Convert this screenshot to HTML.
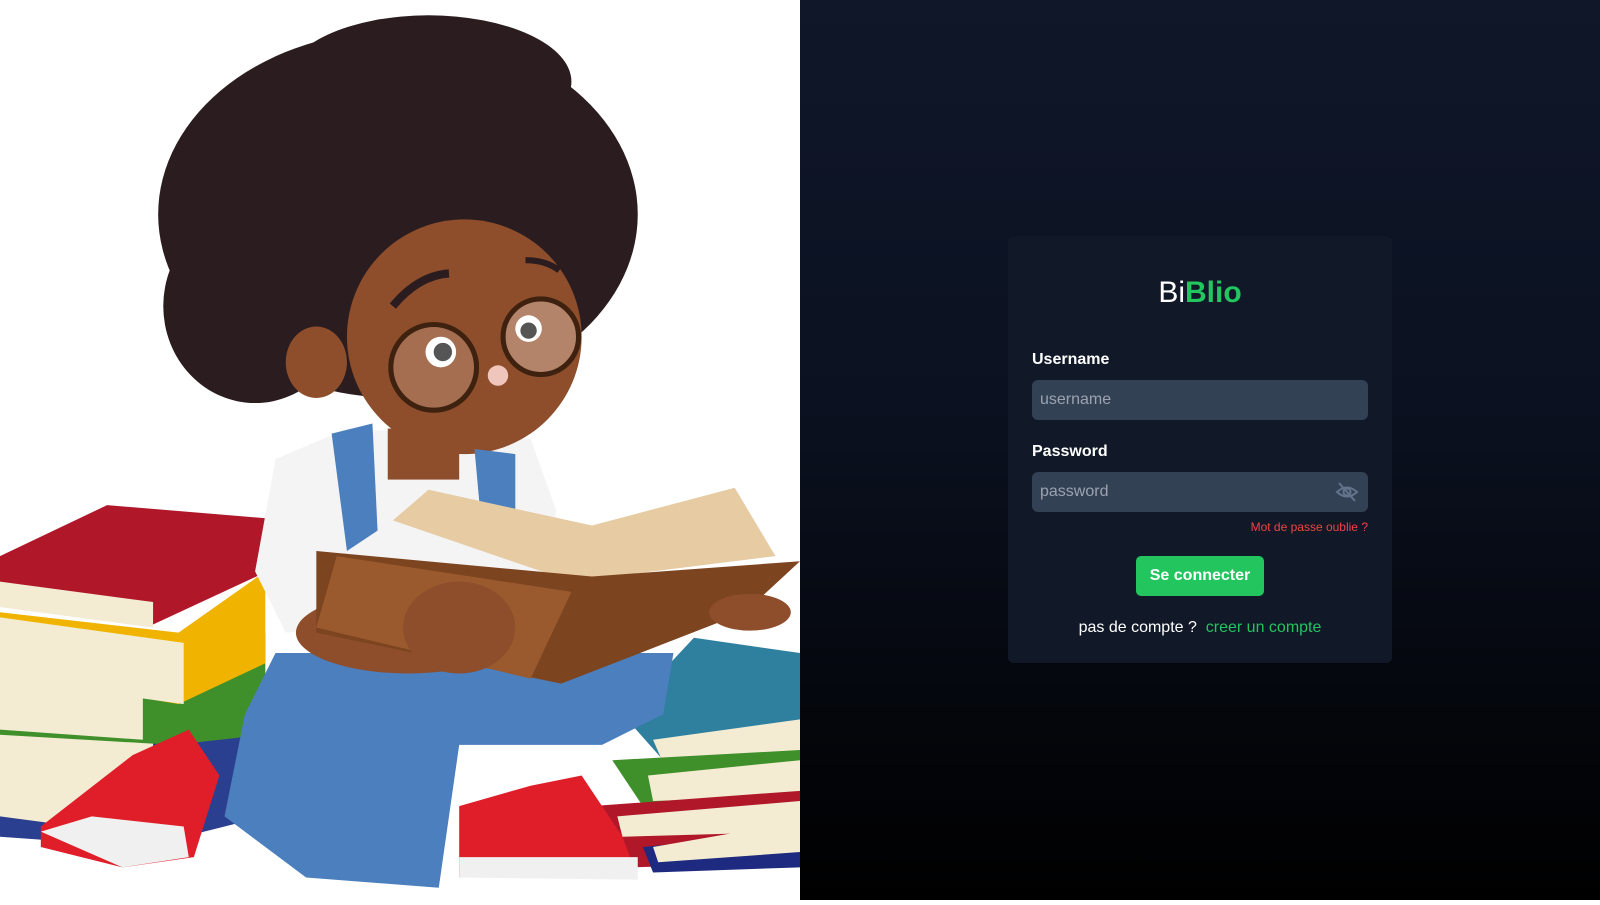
<!DOCTYPE html>
<html><head><meta charset="utf-8"><style>
*{margin:0;padding:0;box-sizing:border-box}
body{width:1600px;height:900px;overflow:hidden;font-family:"Liberation Sans",sans-serif;position:relative;background:#fff}
.left{position:absolute;left:0;top:0;width:800px;height:900px;background:#fff}
.right{position:absolute;left:800px;top:0;width:800px;height:900px;background:linear-gradient(#0f1729 0%,#0b1120 45%,#000 100%)}
.card{position:absolute;left:208px;top:236px;width:384px;height:427px;background:#111827;border-radius:6px}
h1{position:absolute;left:0;right:0;top:276px;text-align:center;font-size:30px;font-weight:normal;color:#fff}
h1 b{color:#22c55e;font-weight:bold}
.lbl{position:absolute;left:1032px;color:#fff;font-weight:bold;font-size:16px}
.inp{position:absolute;left:1032px;width:336px;height:40px;background:#334155;border-radius:6px;color:#9ca3af;font-size:16px;padding-left:8px;line-height:40px}
.abs{position:absolute}
</style></head><body>
<div class="left">
<svg width="800" height="900" viewBox="0 0 784 882">
<!-- left books -->
<polygon points="0,720 140,705 260,690 260,800 140,830 0,820" fill="#2a3f8f"/>
<polygon points="0,690 150,700 150,820 0,800" fill="#f3ecd2"/>
<polygon points="0,650 170,660 260,620 260,720 170,730 0,720" fill="#3f8f2a"/>
<polygon points="0,660 140,665 140,725 0,715" fill="#f3ecd2"/>
<polygon points="0,600 175,620 260,560 260,650 175,690 0,660" fill="#f0b400"/>
<polygon points="0,605 180,630 180,690 0,665" fill="#f3ecd2"/>
<polygon points="0,545 105,495 262,508 262,560 150,612 0,585" fill="#b0182a"/>
<polygon points="0,570 150,590 150,615 0,595" fill="#f3ecd2"/>
<!-- right books -->
<polygon points="610,700 680,625 784,640 784,720 650,745" fill="#2f7f9f"/>
<polygon points="640,725 784,705 784,740 650,748" fill="#f3ecd2"/>
<polygon points="600,745 784,735 784,790 630,790" fill="#3f8f2a"/>
<polygon points="635,760 784,745 784,780 640,785" fill="#f3ecd2"/>
<polygon points="580,790 784,775 784,845 620,850" fill="#b0182a"/>
<polygon points="605,800 784,785 784,815 610,820" fill="#f3ecd2"/>
<polygon points="630,830 784,815 784,850 640,855" fill="#1e2a7f"/>
<polygon points="640,830 784,805 784,835 645,845" fill="#f3ecd2"/>
<!-- hair -->
<ellipse cx="390" cy="210" rx="235" ry="180" fill="#2b1d1f"/>
<ellipse cx="420" cy="80" rx="140" ry="65" fill="#2b1d1f"/>
<ellipse cx="250" cy="300" rx="90" ry="95" fill="#2b1d1f"/>
<!-- shirt -->
<polygon points="270,450 340,420 520,430 545,500 540,600 280,620 250,560" fill="#f4f4f4"/>
<!-- face -->
<ellipse cx="455" cy="330" rx="115" ry="115" fill="#8e4e2c"/>
<ellipse cx="310" cy="355" rx="30" ry="35" fill="#8e4e2c"/>
<rect x="380" y="420" width="70" height="50" fill="#8e4e2c"/>
<circle cx="425" cy="360" r="42" fill="#c9a08a" fill-opacity=".4" stroke="#3e220f" stroke-width="5"/>
<circle cx="530" cy="330" r="37" fill="#d8b8a8" fill-opacity=".5" stroke="#3e220f" stroke-width="5"/>
<circle cx="432" cy="345" r="15" fill="#fff"/><circle cx="434" cy="345" r="9" fill="#555"/>
<circle cx="518" cy="322" r="13" fill="#fff"/><circle cx="518" cy="324" r="8" fill="#555"/>
<path d="M385 300 Q410 270 440 268" stroke="#2b1d1f" stroke-width="8" fill="none"/>
<path d="M515 255 Q535 255 548 265" stroke="#2b1d1f" stroke-width="6" fill="none"/>
<circle cx="488" cy="368" r="10" fill="#f0c6bc"/>
<!-- straps -->
<polygon points="325,425 365,415 370,520 340,540" fill="#4b7fbd"/>
<polygon points="465,440 505,445 505,500 470,495" fill="#4b7fbd"/>
<!-- pants -->
<polygon points="270,640 660,640 650,700 590,730 450,730 430,870 300,860 220,800 240,700" fill="#4b7fbd"/>
<!-- arms -->
<ellipse cx="400" cy="620" rx="110" ry="40" fill="#8e4e2c"/>
<!-- book -->
<polygon points="385,510 420,480 580,515 720,478 760,545 560,570" fill="#e6cba3"/>
<polygon points="310,540 580,565 784,550 730,600 550,670 310,620" fill="#7d4420"/>
<polygon points="330,545 560,580 520,665 310,615" fill="#9a5a2e"/>
<ellipse cx="450" cy="615" rx="55" ry="45" fill="#8e4e2c"/>
<ellipse cx="735" cy="600" rx="40" ry="18" fill="#8e4e2c"/>
<!-- shoes -->
<polygon points="40,810 130,740 185,715 215,760 190,840 120,850 40,830" fill="#e01e2a"/>
<polygon points="40,815 120,850 185,840 180,810 90,800" fill="#f0f0f0"/>
<polygon points="450,790 520,770 570,760 610,820 625,860 450,860" fill="#e01e2a"/>
<polygon points="450,840 625,840 625,862 450,860" fill="#f0f0f0"/>
</svg>
</div>
<div class="right"><div class="card"></div></div>
<h1 style="left:1008px;width:384px;top:276px">Bi<b>Blio</b></h1>
<div class="lbl" style="top:351px">Username</div>
<div class="inp" style="top:380px">username</div>
<div class="lbl" style="top:443px">Password</div>
<div class="inp" style="top:472px">password</div>
<svg class="abs" style="left:1335px;top:482px" width="24" height="20" viewBox="0 0 24 20"><path d="M2 10 Q12 1 22 10 Q12 19 2 10Z" fill="none" stroke="#64748b" stroke-width="2"/><circle cx="12" cy="10" r="3.5" fill="none" stroke="#64748b" stroke-width="2"/><path d="M4 1 L20 19" stroke="#64748b" stroke-width="2"/></svg>
<div class="abs" style="left:1200px;width:168px;top:520px;text-align:right;color:#ef4444;font-size:12px">Mot de passe oublie ?</div>
<div class="abs" style="left:1136px;top:556px;width:128px;height:40px;background:#22c55e;border-radius:5px;color:#fff;font-weight:bold;font-size:16px;text-align:center;line-height:40px">Se connecter</div>
<div class="abs" style="left:1008px;width:384px;top:619px;text-align:center;font-size:16px;color:#fff">pas de compte ? &nbsp;<span style="color:#22c55e">creer un compte</span></div>
</body></html>
